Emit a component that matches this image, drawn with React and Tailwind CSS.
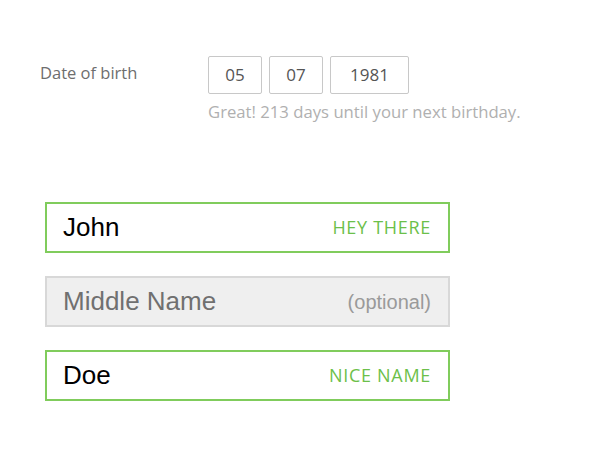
import React from 'react';

const museo = { fontFamily: '"Open Sans", Lato, sans-serif' };

const NameField = ({ value, hint, placeholder, optional }) => (
  <div className={`flex items-center justify-between h-[51px] pl-[16px] pr-[17px] border-2 ${optional ? 'border-[#d8d8d8] bg-[#efefef]' : 'border-[#80cc5c] bg-white'}`}>
    <span className={`text-[26px] font-['Liberation_Sans',Arial,sans-serif] ${optional ? 'text-[#707070]' : 'text-black'}`}>{value || placeholder}</span>
    {optional ? (
      <span className="text-[20px] text-[#9a9a9a] font-['Liberation_Sans',Arial,sans-serif]">(optional)</span>
    ) : (
      <span className="text-[18px] tracking-[0.7px] text-[#6cc04a] uppercase" style={museo}>{hint}</span>
    )}
  </div>
);

const App = () => {
  return (
    <div className="w-[590px] h-[475px] bg-white pt-[56px] pl-[40px]" style={museo}>
      <div className="flex">
        <div className="w-[168px] pt-[5px] text-[16.5px] text-[#6e6e6e]">Date of birth</div>
        <div className="flex flex-col">
          <div className="flex gap-[7px]">
            <div className="w-[54px] h-[38px] border border-[#c8c8c8] rounded-[2px] flex items-center justify-center text-[17px] text-[#555]">05</div>
            <div className="w-[54px] h-[38px] border border-[#c8c8c8] rounded-[2px] flex items-center justify-center text-[17px] text-[#555]">07</div>
            <div className="w-[79px] h-[38px] border border-[#c8c8c8] rounded-[2px] flex items-center justify-center text-[17px] text-[#555]">1981</div>
          </div>
          <div className="mt-[5px] text-[16.7px] text-[#b0b0b0]">Great! 213 days until your next birthday.</div>
        </div>
      </div>
      <div className="w-[405px] ml-[5px] mt-[78px] flex flex-col gap-[23px]">
        <NameField value="John" hint="Hey there" />
        <NameField placeholder="Middle Name" optional />
        <NameField value="Doe" hint="Nice name" />
      </div>
    </div>
  );
};

export default App;
